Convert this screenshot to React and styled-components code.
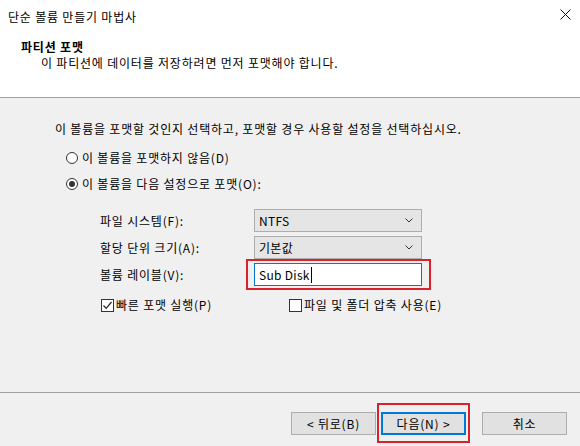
import React from "react";
import styled, { createGlobalStyle, css } from "styled-components";

const GlobalStyle = createGlobalStyle`
  html, body {
    margin: 0;
    padding: 0;
    background: #f0f0f0;
  }
  * {
    box-sizing: border-box;
  }
`;

const Window = styled.div`
  width: 580px;
  height: 446px;
  display: flex;
  flex-direction: column;
  background: #f0f0f0;
  color: #000;
  font-family: "Noto Sans CJK KR", "Liberation Sans", sans-serif;
  font-size: 12px;
  line-height: 16px;
  letter-spacing: 0.8px;
  overflow: hidden;
`;

const Header = styled.div`
  height: 98px;
  flex-shrink: 0;
  background: #fff;
  border-bottom: 1px solid #a0a0a0;
`;

const TitleBar = styled.div`
  height: 34px;
  display: flex;
  align-items: center;
  justify-content: space-between;
  padding: 0 9px 0 8px;
`;

const CloseButton = styled.div`
  width: 11px;
  height: 11px;
  margin-top: -6px;
  display: flex;

  svg {
    width: 11px;
    height: 11px;
  }
`;

const PageTitle = styled.div`
  font-weight: bold;
  margin: 5px 0 0 21px;
`;

const PageSubtitle = styled.div`
  margin: 0 0 0 41px;
`;

const Body = styled.div`
  flex: 1;
  padding: 23px 0 0 55px;
`;

const Instruction = styled.div``;

const OptionRow = styled.label`
  height: 26px;
  display: flex;
  align-items: center;
  gap: 4px;
  margin-left: 11px;

  &:first-of-type {
    margin-top: 8px;
  }
`;

const Radio = styled.span`
  width: 12px;
  height: 12px;
  border-radius: 50%;
  border: 1px solid #333;
  background: #fff;
  display: flex;
  align-items: center;
  justify-content: center;

  &::after {
    content: "";
    width: 6px;
    height: 6px;
    border-radius: 50%;
    background: ${(p) => (p.$checked ? "#333" : "transparent")};
  }
`;

const Fields = styled.div`
  margin: 12px 0 0 45px;
  display: grid;
  grid-template-columns: 154px 168px;
  row-gap: 4px;
  align-items: center;
`;

const FieldLabel = styled.div``;

const fieldBox = css`
  height: 23px;
  display: flex;
  align-items: center;
  padding: 0 8px 0 4px;
`;

const Combo = styled.div`
  ${fieldBox}
  background: #e5e5e5;
  border: 1px solid #adadad;
  justify-content: space-between;
  letter-spacing: 0.3px;

  svg {
    width: 8px;
    height: 5px;
  }
`;

const Highlight = styled.div`
  position: relative;
  margin-left: ${(p) => p.$gap || 0}px;

  &::after {
    content: "";
    position: absolute;
    inset: ${(p) => p.$inset};
    border: 2px solid #d8222c;
    pointer-events: none;
  }
`;

const TextBox = styled.div`
  ${fieldBox}
  background: #fff;
  border: 1px solid #0078d7;
  letter-spacing: 0.3px;
`;

const Caret = styled.span`
  display: inline-block;
  width: 1px;
  height: 16px;
  background: #000;
  margin-left: 1px;
`;

const CheckRow = styled.div`
  display: grid;
  grid-template-columns: 188px auto;
  margin: 11px 0 0 46px;
`;

const CheckLabel = styled.label`
  display: flex;
  align-items: center;
  gap: 2px;
`;

const CheckBox = styled.span`
  width: 13px;
  height: 13px;
  border: 1px solid #333;
  background: #fff;
  display: flex;
  align-items: center;
  justify-content: center;

  svg {
    width: 11px;
    height: 11px;
  }
`;

const Footer = styled.div`
  height: 54px;
  flex-shrink: 0;
  border-top: 1px solid #a0a0a0;
  display: flex;
  justify-content: flex-end;
  align-items: flex-start;
  padding: 19px 13px 0 0;
`;

const Button = styled.div`
  width: 85px;
  height: 23px;
  display: flex;
  align-items: center;
  justify-content: center;
  background: #e1e1e1;
  border: ${(p) => (p.$default ? "2px solid #0078d7" : "1px solid #adadad")};
  margin-left: ${(p) => p.$gap || 0}px;
`;

const ChevronDown = () => (
  <svg viewBox="0 0 8 5">
    <path d="M0.5 0.5 L4 4 L7.5 0.5" fill="none" stroke="#333" strokeWidth="1" />
  </svg>
);

const CheckMark = () => (
  <svg viewBox="0 0 11 11">
    <path d="M1.5 5.5 L4.2 8.3 L9.5 2" fill="none" stroke="#222" strokeWidth="1.2" />
  </svg>
);

const App = () => {
  return (
    <>
      <GlobalStyle />
      <Window>
        <Header>
          <TitleBar>
            <span>단순 볼륨 만들기 마법사</span>
            <CloseButton>
              <svg viewBox="0 0 11 11">
                <path d="M0.5 0.5 L10.5 10.5 M10.5 0.5 L0.5 10.5" stroke="#111" strokeWidth="1" />
              </svg>
            </CloseButton>
          </TitleBar>
          <PageTitle>파티션 포맷</PageTitle>
          <PageSubtitle>이 파티션에 데이터를 저장하려면 먼저 포맷해야 합니다.</PageSubtitle>
        </Header>

        <Body>
          <Instruction>
            이 볼륨을 포맷할 것인지 선택하고, 포맷할 경우 사용할 설정을 선택하십시오.
          </Instruction>
          <OptionRow>
            <Radio />
            이 볼륨을 포맷하지 않음(D)
          </OptionRow>
          <OptionRow>
            <Radio $checked />
            이 볼륨을 다음 설정으로 포맷(O):
          </OptionRow>

          <Fields>
            <FieldLabel>파일 시스템(F):</FieldLabel>
            <Combo>
              NTFS
              <ChevronDown />
            </Combo>
            <FieldLabel>할당 단위 크기(A):</FieldLabel>
            <Combo>
              기본값
              <ChevronDown />
            </Combo>
            <FieldLabel>볼륨 레이블(V):</FieldLabel>
            <Highlight $inset="-4px -9px -4px -8px">
              <TextBox>
                Sub Disk
                <Caret />
              </TextBox>
            </Highlight>
          </Fields>

          <CheckRow>
            <CheckLabel>
              <CheckBox>
                <CheckMark />
              </CheckBox>
              빠른 포맷 실행(P)
            </CheckLabel>
            <CheckLabel>
              <CheckBox />
              파일 및 폴더 압축 사용(E)
            </CheckLabel>
          </CheckRow>
        </Body>

        <Footer>
          <Button>&lt; 뒤로(B)</Button>
          <Highlight $gap={5} $inset="-9px -4px -8px -4px">
            <Button $default>다음(N) &gt;</Button>
          </Highlight>
          <Button $gap={16}>취소</Button>
        </Footer>
      </Window>
    </>
  );
};

export default App;
